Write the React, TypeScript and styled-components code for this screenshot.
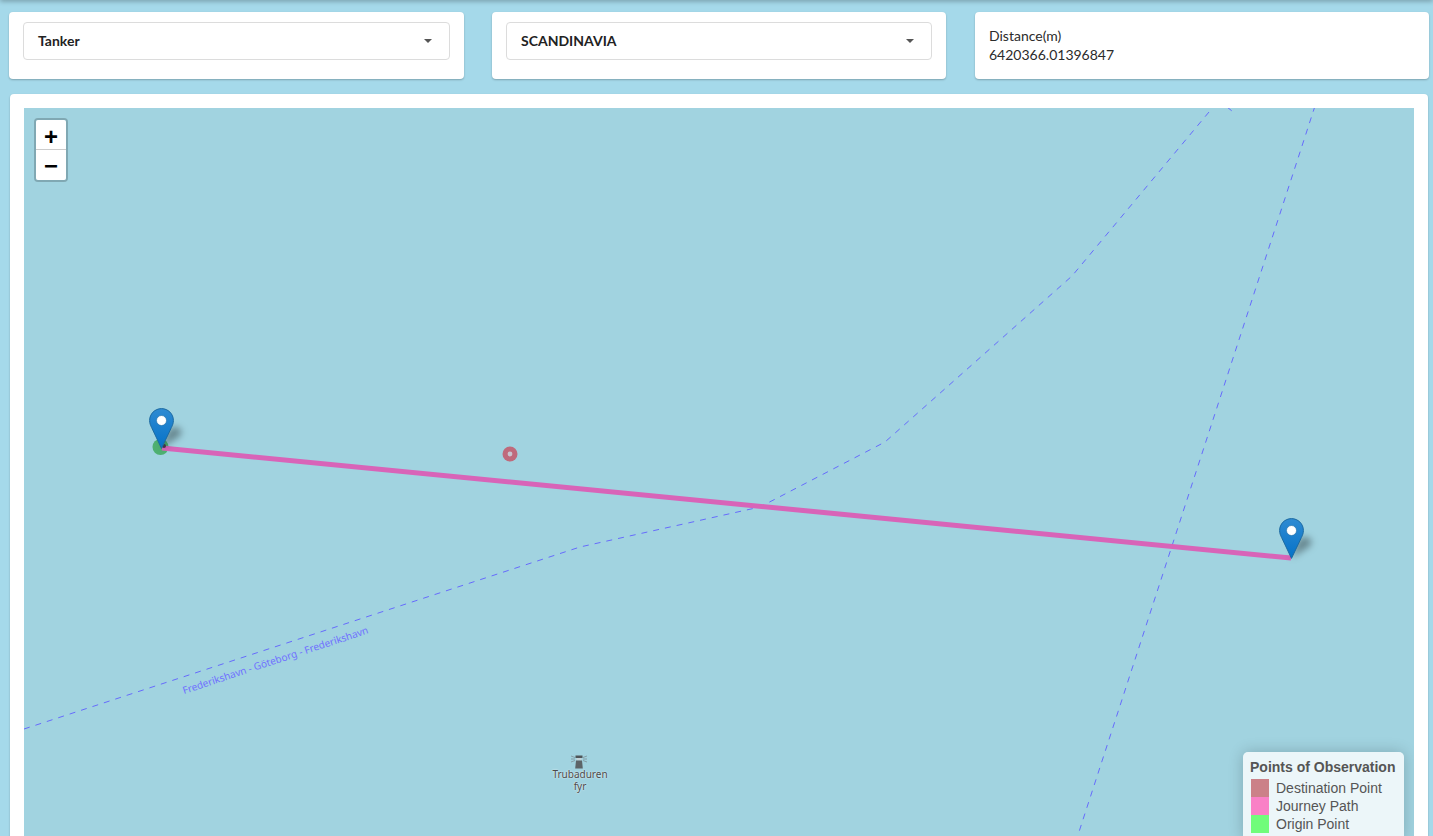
import React from "react";
import styled, { createGlobalStyle } from "styled-components";

const Global = createGlobalStyle`
  html, body { margin: 0; padding: 0; height: 100%; overflow: hidden; background: #a5d9ea; }
  #root { height: 100%; }
`;

const Page = styled.div`
  height: 836px;
  overflow: hidden;
  position: relative;
  box-sizing: border-box;
  padding: 12px 0 0 9px;
  font-family: Lato, "Liberation Sans", sans-serif;
  font-size: 14px;
  color: #2b2b2b;
`;

const TopEdge = styled.div`
  position: absolute;
  top: -4px;
  left: 0;
  right: 0;
  height: 4px;
  box-shadow: 0 1px 5px rgba(0, 0, 0, 0.35);
`;

const TopRow = styled.div`
  display: grid;
  grid-template-columns: 455px 454px 454.7px;
  column-gap: 28px;
  height: 67px;
`;

const Card = styled.div`
  background: #fff;
  border-radius: 4px;
  box-shadow: 0 1px 2px rgba(0, 0, 0, 0.25);
  box-sizing: border-box;
  padding: 10px 14px;
`;

const SelectBox = styled.div`
  height: 38px;
  box-sizing: border-box;
  border: 1px solid #dcdcdc;
  border-radius: 4px;
  display: flex;
  align-items: center;
  justify-content: space-between;
  padding: 0 17px 2px 14px;
  font-weight: 700;
  color: #222;
  background: #fff;
`;

const Caret = styled.span`
  width: 0;
  height: 0;
  margin-top: 2px;
  border-left: 4px solid transparent;
  border-right: 4px solid transparent;
  border-top: 4px solid #555;
`;

const InfoCard = styled(Card)`
  margin-left: 1px;
  padding: 14px 14px;
  line-height: 19px;
`;

const MapCard = styled(Card)`
  margin-top: 15px;
  margin-left: 1px;
  width: 1418px;
  padding: 14px;
  height: 800px;
`;

const MapArea = styled.div`
  position: relative;
  width: 1390px;
  height: 786px;
  background: #a1d3e0;
  overflow: hidden;
`;

const MapDrawing = styled.svg`
  position: absolute;
  inset: 0;
  width: 100%;
  height: 100%;
`;

const ZoomBar = styled.div`
  position: absolute;
  left: 10px;
  top: 10px;
  width: 30px;
  border: 2px solid rgba(0, 0, 0, 0.2);
  border-radius: 4px;
  background-clip: padding-box;
  display: flex;
  flex-direction: column;
`;

const ZoomButton = styled.div<{ $last?: boolean }>`
  height: 30px;
  overflow: hidden;
  box-sizing: border-box;
  background: #fff;
  color: #000;
  font: 700 24px/${(p) => (p.$last ? "32px" : "33px")} "Liberation Sans", sans-serif;
  text-align: center;
  border-bottom: ${(p) => (p.$last ? "none" : "1px solid #ccc")};
  border-radius: ${(p) => (p.$last ? "0 0 2px 2px" : "2px 2px 0 0")};
`;

const Pin = styled.svg<{ $x: number; $y: number }>`
  position: absolute;
  left: ${(p) => p.$x}px;
  top: ${(p) => p.$y}px;
  overflow: visible;
`;

const PlaceLabel = styled.div`
  position: absolute;
  left: 506px;
  top: 660px;
  width: 100px;
  text-align: center;
  font: 10px/12px "Noto Sans", "Open Sans", sans-serif;
  color: #4a4a4a;
  text-shadow: 0 0 2px #dfeef2, 0 0 1px #dfeef2;
`;

const Legend = styled.div`
  position: absolute;
  right: 10px;
  top: 644px;
  width: 161px;
  box-sizing: border-box;
  padding: 7px 8px;
  background: rgba(255, 255, 255, 0.8);
  border-radius: 5px;
  box-shadow: 0 0 15px rgba(0, 0, 0, 0.2);
  font: 14px/16px "Liberation Sans", Arial, sans-serif;
  color: #555;
`;

const LegendTitle = styled.div`
  font-weight: 700;
  margin: 0 0 4px -1px;
  white-space: nowrap;
`;

const LegendRow = styled.div`
  display: flex;
  align-items: center;
  height: 18px;
  white-space: nowrap;
`;

const Swatch = styled.i<{ $color: string }>`
  display: block;
  width: 18px;
  height: 18px;
  margin-right: 7px;
  background: ${(p) => p.$color};
  opacity: 0.7;
`;

const MarkerPin = ({ x, y, id }: { x: number; y: number; id: string }) => (
  <Pin $x={x} $y={y} width="25" height="41" viewBox="0 0 25 41">
    <defs>
      <linearGradient id={id} x1="0" y1="0" x2="0" y2="1">
        <stop offset="0" stopColor="#2f8bd2" />
        <stop offset="1" stopColor="#0572c8" />
      </linearGradient>
      <filter id={`${id}-b`} x="-80%" y="-80%" width="260%" height="260%">
        <feGaussianBlur stdDeviation="3.5" />
      </filter>
    </defs>
    <path d="M12.5 40 L31 28 C35 23 30 18 24 19 C20 20 18 25 16 29 Z" fill="rgba(0,0,0,0.36)" filter={`url(#${id}-b)`} />
    <path
      d="M12.5.6C5.9.6.6 5.9.6 12.5c0 2.6.8 4.7 2 7L12.5 40.4l9.9-20.9c1.2-2.3 2-4.4 2-7C24.4 5.9 19.1.6 12.5.6z"
      fill={`url(#${id})`}
      stroke="#1c6aa2"
      strokeWidth="1"
    />
    <circle cx="12.5" cy="12.5" r="5" fill="#fff" stroke="#1a6aa5" strokeWidth="0.6" />
  </Pin>
);

export default function App() {
  return (
    <Page>
      <Global />
      <TopEdge />
      <TopRow>
        <Card>
          <SelectBox>
            Tanker
            <Caret />
          </SelectBox>
        </Card>
        <Card>
          <SelectBox>
            SCANDINAVIA
            <Caret />
          </SelectBox>
        </Card>
        <InfoCard>
          <div>Distance(m)</div>
          <div>6420366.01396847</div>
        </InfoCard>
      </TopRow>
      <MapCard>
        <MapArea>
          <MapDrawing viewBox="0 0 1390 786">
            <g fill="none" stroke="#5f5fff" strokeWidth="0.9" strokeDasharray="6 6">
              <path d="M0 621 L556 439 L574 435 L736 399 L861 334 L1048 168 L1190 -2" />
              <path d="M1203 -1 L1208 3" />
              <path d="M1291 -2 L1053 730" />
            </g>
            <text
              x="0"
              y="0"
              transform="translate(160 586) rotate(-18.2)"
              fill="#7070ff"
              fontFamily="'Noto Sans', 'Open Sans', sans-serif"
              fontSize="10"
            >
              Frederikshavn - Göteborg - Frederikshavn
            </text>
            <g transform="translate(555 647)">
              <path d="M-3.5 0.5h7v2.5h-7z" fill="#4f5559" />
              <rect x="-2.5" y="3" width="5" height="2.5" fill="#c3d3d8" />
              <path d="M-3 5.5h6l0.8 8h-7.6z" fill="#5c6468" />
              <path d="M-4 2.5l-4 -1.5 M-4 4l-4 0 M-4 5.5l-4 1.5 M4 2.5l4 -1.5 M4 4l4 0 M4 5.5l4 1.5" stroke="#7d9098" strokeWidth="0.8" />
            </g>
            <circle cx="136.5" cy="339" r="8" fill="#3fa95d" fillOpacity="0.85" />
            <path d="M138 340 L1267 450" stroke="#d864b8" strokeWidth="5" fill="none" />
            <circle cx="140" cy="338" r="2" fill="#4a3a50" />
            <circle cx="486" cy="346" r="7.5" fill="#bf6a7c" />
            <circle cx="486" cy="346" r="2.4" fill="#c9c4d0" />
          </MapDrawing>
          <MarkerPin x={125} y={300} id="pin-a" />
          <MarkerPin x={1255} y={410} id="pin-b" />
          <PlaceLabel>
            Trubaduren
            <br />
            fyr
          </PlaceLabel>
          <ZoomBar>
            <ZoomButton>+</ZoomButton>
            <ZoomButton $last>−</ZoomButton>
          </ZoomBar>
          <Legend>
            <LegendTitle>Points of Observation</LegendTitle>
            <LegendRow>
              <Swatch $color="#bd5058" />
              Destination Point
            </LegendRow>
            <LegendRow>
              <Swatch $color="#ff4fb0" />
              Journey Path
            </LegendRow>
            <LegendRow>
              <Swatch $color="#3cff44" />
              Origin Point
            </LegendRow>
          </Legend>
        </MapArea>
      </MapCard>
    </Page>
  );
}
